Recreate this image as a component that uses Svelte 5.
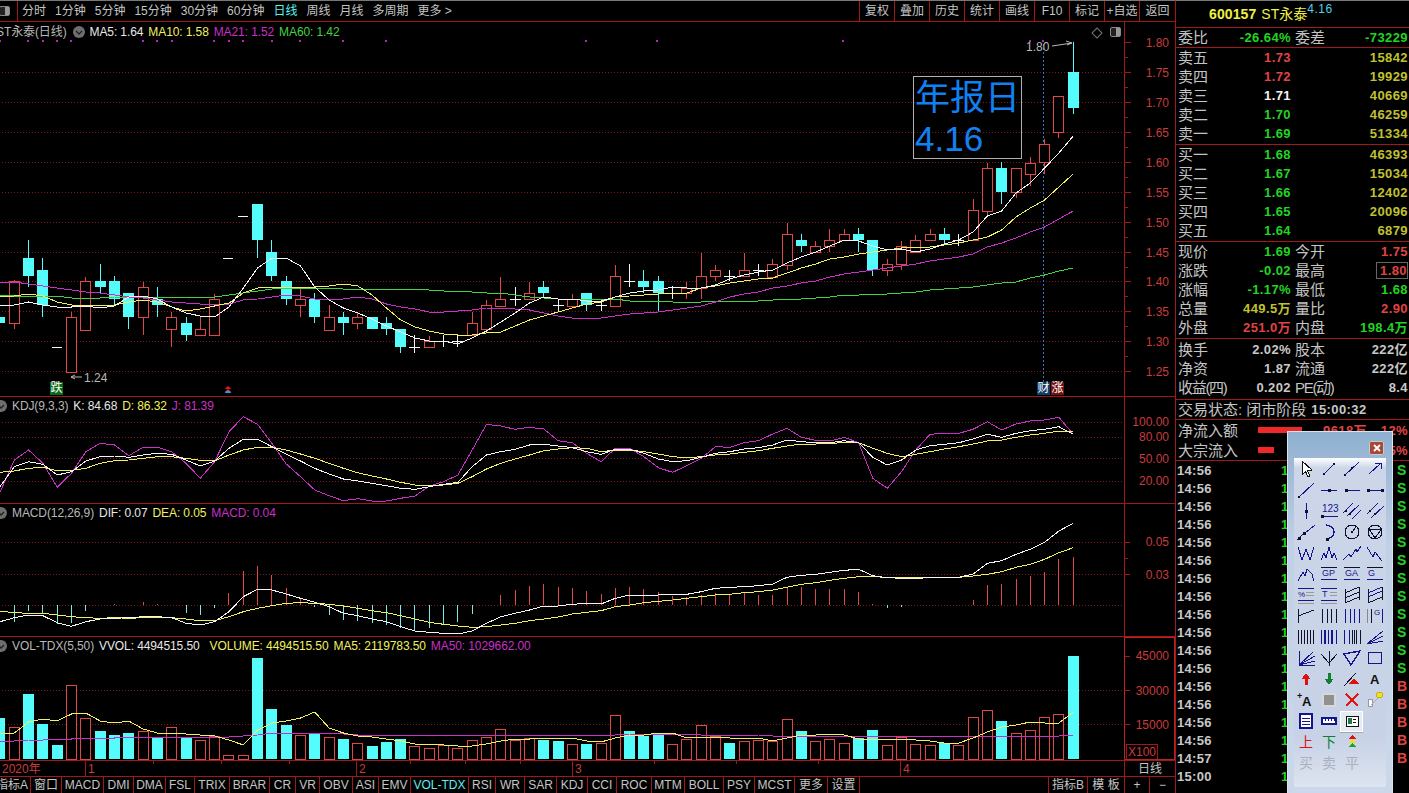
<script>
	// x of candle n; n runs from -1 (clipped at the left edge) to 74
	const X = (n) => 14.3 + 14.31 * n;
	const px = (n) => Math.floor(X(n));

	// [wickTop, bodyTop, bodyBottom, wickBottom, kind] u=red d=cyan x=doji f=flat
	const candles = [
		[287, 317, 323, 335, 'd'], [280, 281, 323, 329, 'u'], [240, 258, 276, 287, 'd'], [258, 270, 305, 317, 'd'],
		[347, 347, 347, 347, 'f'], [312, 317, 372, 373, 'u'], [277, 281, 330, 330, 'u'], [264, 281, 287, 293, 'd'],
		[276, 281, 299, 305, 'd'], [293, 293, 317, 329, 'd'], [282, 287, 317, 335, 'u'], [287, 299, 305, 317, 'd'],
		[312, 317, 329, 347, 'u'], [317, 323, 335, 341, 'd'], [317, 329, 335, 335, 'u'], [294, 299, 335, 335, 'u'],
		[258, 258, 258, 258, 'f'], [216, 216, 216, 216, 'f'], [204, 204, 240, 258, 'd'], [240, 252, 276, 281, 'd'],
		[276, 281, 299, 305, 'd'], [287, 299, 305, 317, 'u'], [293, 299, 317, 323, 'd'], [305, 317, 330, 330, 'u'],
		[312, 317, 323, 335, 'd'], [312, 317, 323, 329, 'u'], [317, 317, 329, 329, 'd'], [317, 323, 329, 335, 'd'],
		[329, 329, 347, 353, 'd'], [335, 347, 347, 353, 'x'], [336, 341, 347, 347, 'u'], [335, 341, 341, 347, 'x'],
		[335, 341, 341, 347, 'x'], [312, 323, 335, 335, 'u'], [300, 305, 329, 329, 'u'], [277, 299, 306, 306, 'u'],
		[287, 299, 299, 306, 'x'], [282, 293, 299, 300, 'u'], [281, 287, 293, 297, 'd'], [299, 305, 305, 311, 'x'],
		[294, 299, 306, 306, 'u'], [293, 293, 305, 311, 'd'], [299, 305, 305, 311, 'x'], [265, 276, 306, 306, 'u'],
		[264, 281, 281, 287, 'x'], [270, 281, 287, 293, 'd'], [276, 281, 293, 311, 'd'], [287, 293, 293, 299, 'x'],
		[282, 288, 293, 299, 'u'], [253, 276, 288, 299, 'u'], [265, 270, 276, 281, 'u'], [270, 276, 276, 281, 'x'],
		[253, 270, 276, 277, 'u'], [264, 270, 270, 276, 'x'], [259, 264, 277, 277, 'u'], [223, 234, 265, 270, 'u'],
		[234, 240, 246, 252, 'd'], [241, 246, 252, 253, 'u'], [229, 240, 246, 252, 'u'], [229, 234, 240, 241, 'u'],
		[228, 234, 240, 252, 'd'], [240, 240, 270, 276, 'd'], [259, 264, 270, 276, 'u'], [241, 246, 264, 270, 'u'],
		[235, 240, 252, 252, 'u'], [229, 234, 240, 241, 'u'], [228, 234, 240, 245, 'd'], [234, 240, 240, 246, 'x'],
		[199, 210, 240, 240, 'u'], [163, 168, 211, 216, 'u'], [162, 168, 192, 204, 'd'], [168, 168, 192, 198, 'u'],
		[157, 163, 174, 186, 'u'], [139, 144, 162, 174, 'u'], [96, 96, 132, 138, 'u'], [42, 72, 108, 114, 'd']
	];

	const ma5 = [305, 305, 302, 305, 307, 307, 306, 308, 306, 297, 296, 299, 307, 313, 316, 317, 307, 288, 268, 258, 258, 266, 287, 300, 308, 313, 319, 326, 332, 338, 341, 341, 344, 338, 331, 322, 313, 303, 297, 299, 299, 301, 301, 297, 293, 291, 290, 287, 288, 288, 285, 279, 275, 272, 270, 263, 257, 252, 246, 240, 241, 246, 250, 249, 252, 249, 244, 240, 232, 216, 211, 193, 183, 168, 153, 136];
	const ma10 = [297, 296, 294, 296, 302, 305, 305, 305, 305, 302, 300, 302, 307, 311, 309, 306, 303, 293, 288, 287, 287, 287, 287, 286, 284, 286, 295, 308, 320, 327, 331, 334, 335, 335, 333, 332, 326, 320, 316, 312, 308, 304, 302, 297, 296, 295, 294, 293, 293, 288, 286, 283, 281, 279, 278, 273, 268, 264, 259, 257, 254, 252, 250, 248, 247, 247, 245, 243, 240, 237, 230, 217, 208, 200, 187, 174];
	const ma21 = [282, 282, 284, 286, 288, 290, 292, 293, 295, 297, 298, 300, 302, 303, 304, 305, 304, 300, 299, 297, 295, 296, 299, 299, 299, 297, 299, 304, 307, 309, 312, 312, 311, 310, 308, 308, 309, 310, 313, 316, 318, 318, 318, 316, 314, 313, 312, 310, 308, 306, 302, 297, 294, 292, 288, 286, 283, 281, 277, 274, 272, 270, 268, 266, 264, 261, 259, 257, 254, 247, 243, 238, 232, 227, 219, 211];
	const ma60 = [295, 296, 296, 296, 296, 298, 299, 298, 297, 297, 297, 297, 297, 297, 297, 297, 295, 293, 291, 289, 288, 288, 288, 288, 289, 289, 289, 289, 289, 289, 290, 291, 291, 292, 293, 293, 295, 297, 298, 299, 299, 299, 299, 299, 301, 301, 301, 302, 302, 302, 301, 301, 301, 301, 300, 299, 299, 298, 297, 295, 295, 294, 294, 293, 292, 290, 289, 288, 287, 285, 283, 282, 278, 275, 271, 268];

	// KDJ and MACD samples read off at 3x, from y=395
	const z = (a) => a.map((v) => 395 + v / 3);
	const kdjK = z([275, 215, 200, 208, 240, 230, 198, 185, 183, 187, 180, 175, 178, 195, 213, 198, 160, 133, 133, 155, 178, 198, 220, 237, 252, 258, 265, 272, 280, 283, 275, 268, 262, 215, 180, 170, 163, 150, 148, 153, 158, 170, 178, 163, 163, 175, 192, 200, 197, 187, 175, 170, 162, 158, 150, 135, 140, 143, 143, 137, 143, 187, 210, 195, 165, 152, 148, 143, 132, 118, 127, 115, 107, 103, 95, 118]);
	const kdjD = z([232, 228, 220, 217, 227, 226, 220, 205, 197, 195, 190, 185, 185, 190, 196, 198, 180, 165, 157, 157, 165, 177, 190, 205, 220, 233, 243, 252, 262, 270, 272, 270, 265, 245, 222, 205, 192, 180, 167, 162, 158, 160, 170, 165, 165, 170, 177, 185, 188, 185, 180, 177, 172, 167, 160, 153, 147, 147, 145, 143, 143, 160, 175, 185, 178, 170, 162, 155, 147, 138, 135, 127, 120, 115, 108, 108]);
	const kdjJ = z([292, 195, 165, 205, 277, 235, 170, 145, 150, 182, 157, 157, 170, 205, 250, 200, 110, 65, 88, 145, 207, 245, 285, 302, 317, 311, 318, 318, 310, 303, 273, 260, 240, 165, 88, 93, 103, 97, 102, 137, 143, 175, 200, 160, 160, 185, 218, 232, 212, 190, 155, 157, 143, 137, 117, 100, 127, 136, 138, 127, 143, 250, 280, 230, 165, 118, 115, 115, 103, 80, 105, 87, 78, 75, 67, 118]);
	const dif = z([680, 668, 660, 662, 683, 694, 680, 672, 670, 668, 665, 665, 668, 685, 690, 680, 650, 605, 583, 585, 597, 610, 622, 635, 655, 662, 672, 680, 695, 708, 712, 715, 717, 708, 685, 665, 655, 645, 633, 633, 628, 625, 627, 610, 600, 600, 600, 598, 598, 590, 580, 577, 575, 572, 567, 547, 541, 538, 532, 526, 523, 542, 548, 550, 550, 548, 547, 547, 537, 505, 497, 478, 463, 442, 408, 385]);
	const dea = z([648, 653, 655, 655, 660, 665, 668, 670, 668, 670, 668, 667, 668, 672, 677, 677, 665, 650, 640, 632, 625, 623, 625, 628, 633, 640, 647, 653, 662, 672, 682, 688, 693, 697, 695, 690, 685, 677, 672, 666, 657, 652, 647, 635, 630, 623, 619, 615, 610, 605, 600, 598, 593, 590, 585, 577, 568, 563, 556, 550, 545, 545, 547, 548, 548, 547, 547, 547, 543, 538, 530, 517, 508, 493, 473, 458]);
	const hist = z([680, 680, 648, 655, 688, 683, 648, 631, 628, 631, 622, 627, 631, 655, 660, 640, 595, 528, 513, 540, 578, 610, 636, 660, 675, 678, 685, 690, 700, 708, 698, 690, 680, 657, 630, 600, 585, 573, 568, 575, 578, 588, 597, 578, 576, 582, 592, 603, 607, 601, 595, 598, 595, 600, 600, 578, 576, 582, 582, 582, 590, 628, 640, 636, 631, 630, 631, 631, 615, 570, 567, 552, 543, 531, 492, 486]);
	const macdBase = 605.3;

	// top of each volume bar, bars stand on y=759
	const volTops = [718, 727, 694, 724, 745, 685, 718, 731, 735, 733, 731, 737, 727, 737, 740, 736, 755, 755, 658, 709, 725, 735, 734, 737, 739, 743, 746, 742, 739, 746, 748, 745, 748, 740, 737, 729, 740, 738, 740, 741, 744, 744, 743, 715, 731, 736, 735, 744, 739, 725, 736, 743, 741, 740, 741, 719, 731, 741, 739, 743, 738, 730, 745, 737, 744, 745, 743, 745, 717, 710, 721, 733, 730, 717, 714, 656];
	const volSide = 'duddd uu ddd u d u d uuuu ddd u d u d u ddd uuuuuuuuu dd u d uu ddd uuuu d uuuu d uuu dd uuuu d uuu d uuuu d'.replace(/ /g, '');
	const volMa5 = [734, 733, 722, 719, 721, 714, 713, 721, 723, 721, 729, 733, 733, 734, 735, 736, 740, 745, 730, 723, 721, 718, 712, 728, 733, 736, 737, 739, 741, 744, 744, 745, 746, 746, 744, 741, 739, 739, 738, 738, 738, 741, 742, 738, 735, 735, 733, 733, 738, 737, 737, 738, 738, 738, 741, 738, 735, 735, 734, 735, 739, 739, 739, 739, 740, 741, 743, 743, 738, 732, 727, 725, 722, 723, 723, 712];
	const volMa50 = [741, 741, 740, 740, 739, 739, 738, 738, 738, 737, 737, 737, 737, 737, 737, 737, 737, 736, 735, 733, 733, 733, 733, 733, 734, 735, 735, 735, 735, 735, 735, 735, 735, 735, 735, 735, 735, 735, 735, 735, 735, 735, 735, 735, 734, 734, 734, 734, 734, 735, 735, 735, 735, 735, 736, 736, 736, 736, 736, 736, 736, 736, 736, 736, 736, 736, 736, 736, 736, 736, 736, 736, 736, 736, 736, 735];

	const pts = (ys) => ys.map((y, i) => `${X(i - 1).toFixed(1)},${y.toFixed(1)}`).join(' ');

	const mainGrid = [72, 102, 132, 162, 192, 222, 252, 281.5, 311.5, 341.5, 371.5];
	const prices = [[1.8, 43], [1.75, 73], [1.7, 103], [1.65, 133], [1.6, 163], [1.55, 193], [1.5, 223], [1.45, 253], [1.4, 282], [1.35, 312], [1.3, 342], [1.25, 372]];
	const signalDots = [0, 28, 43, 57, 71, 143, 157, 172, 214, 229, 243, 272, 300, 343, 386, 586, 657, 843, 1030, 1043];
	const dateTicks = [153, 221, 289, 410, 465, 520, 654, 736, 818];

	const periods = ['分时', '1分钟', '5分钟', '15分钟', '30分钟', '60分钟', '日线', '周线', '月线', '多周期', '更多 >'];
	const tools = ['复权', '叠加', '历史', '统计', '画线', 'F10', '标记', '+自选', '返回'];
	// tab label, width
	const tabs = [['指标A', 31], ['窗口', 31], ['MACD', 42], ['DMI', 30], ['DMA', 32], ['FSL', 29], ['TRIX', 35], ['BRAR', 40], ['CR', 26], ['VR', 24], ['OBV', 33], ['ASI', 26], ['EMV', 32], ['VOL-TDX', 58], ['RSI', 27], ['WR', 29], ['SAR', 32], ['KDJ', 31], ['CCI', 29], ['ROC', 35], ['MTM', 33], ['BOLL', 39], ['PSY', 31], ['MCST', 40], ['更多', 33], ['设置', 32]];

	const sells = [['卖五', '1.73', 'red', '15842'], ['卖四', '1.72', 'red', '19929'], ['卖三', '1.71', 'white', '40669'], ['卖二', '1.70', 'green', '46259'], ['卖一', '1.69', 'green', '51334']];
	const buys = [['买一', '1.68', 'green', '46393'], ['买二', '1.67', 'green', '15034'], ['买三', '1.66', 'green', '12402'], ['买四', '1.65', 'green', '20096'], ['买五', '1.64', 'green', '6879']];
	const quotes = [
		['现价', '1.69', 'green', '今开', '1.75', 'red'],
		['涨跌', '-0.02', 'green', '最高', '1.80', 'red boxed'],
		['涨幅', '-1.17%', 'green', '最低', '1.68', 'green'],
		['总量', '449.5万', 'olive', '量比', '2.90', 'red'],
		['外盘', '251.0万', 'red', '内盘', '198.4万', 'green']
	];
	const stats = [['换手', '2.02%', '股本', '222亿'], ['净资', '1.87', '流通', '222亿'], ['收益(四)', '0.202', 'PE(动)', '8.4']];

	const ticks = Array.from({ length: 18 }, (_, i) => ({
		time: i < 16 ? '14:56' : i === 16 ? '14:57' : '15:00',
		side: i < 12 ? 'S' : i < 17 ? 'B' : ''
	}));

	// drawing palette: one 22x20 svg body per cell
	const B = '#14148c';
	const K = '#101030';
	const L = (a, b, c, d, col = B) => `<line x1="${a}" y1="${b}" x2="${c}" y2="${d}" stroke="${col}"/>`;
	const D = (x, y, s = 3) => `<rect x="${x - s / 2}" y="${y - s / 2}" width="${s}" height="${s}" fill="${K}"/>`;
	const P = (p, col = B) => `<polyline points="${p}" fill="none" stroke="${col}"/>`;
	const T = (s, x, y, size, col = B, w = 400) => `<text x="${x}" y="${y}" font-size="${size}" fill="${col}" font-weight="${w}" font-family="Liberation Sans, Noto Sans CJK SC, sans-serif">${s}</text>`;
	const bars = (xs, col = K) => xs.map((x) => L(x, 3, x, 17, col)).join('');
	const icons = [
		`<path d="M7 2V16L10.5 12.5L13 18L15 17L12.5 11.5L17 11Z" fill="#fff" stroke="#111"/>`,
		L(6, 15, 17, 4) + D(6, 15, 2) + D(16, 5, 2),
		L(3, 17, 18, 3) + D(4, 16, 2) + D(11, 9, 2),
		L(5, 15, 17, 4) + P('11,4 17,4 17,10'),
		L(3, 18, 19, 3) + D(4, 17, 2),
		L(3, 10, 19, 10) + D(11, 10),
		L(4, 10, 19, 10) + D(5, 10),
		L(3, 10, 19, 10) + D(4, 10) + D(18, 10),
		L(11, 2, 11, 18) + D(11, 10),
		T('123', 4, 11, 10) + L(4, 15, 20, 15) + D(4, 15),
		L(2, 12, 12, 2) + L(6, 15, 18, 4) + L(11, 18, 20, 9) + D(5, 10, 2) + D(9, 13, 2),
		L(3, 13, 14, 2) + L(7, 17, 20, 5) + D(6, 10, 2) + D(11, 13, 2),
		L(2, 18, 10, 10, K) + L(10, 11, 20, 3) + D(4, 16) + D(9, 11),
		`<path d="M8 3A8 7 0 0 1 8 17" fill="none" stroke="${B}" stroke-width="1.4"/>` + D(9, 17),
		`<circle cx="11" cy="10" r="7" fill="none" stroke="${K}"/>` + L(11, 10, 15, 5, K) + D(11, 10, 2),
		`<circle cx="11" cy="10" r="7" fill="none" stroke="${K}"/><polygon points="5,7 17,8 11,16" fill="none" stroke="${K}"/>`,
		P('3,4 7,17 11,6 15,17 19,4'),
		P('3,17 6,10 8,15 11,4 14,15 16,10 19,17'),
		P('2,17 8,11 10,14 15,6 16,9 20,3'),
		P('3,4 9,14 11,9 18,18'),
		P('3,17 8,8 10,12 12,5 17,10 19,17'),
		L(3, 3, 19, 3, K) + T('GP', 4, 12, 9) + L(3, 15, 19, 15),
		L(3, 3, 19, 3, K) + T('GA', 4, 12, 9) + L(3, 15, 19, 15),
		L(3, 3, 19, 3, K) + T('G', 4, 12, 9) + L(3, 15, 19, 15),
		L(3, 3, 19, 3) + T('%', 3, 12, 8) + L(11, 7, 19, 7, '#999') + L(11, 10, 19, 10, '#999') + L(3, 15, 19, 15) + L(3, 18, 19, 18, '#999'),
		L(3, 3, 19, 3) + T('T', 4, 12, 9) + L(12, 7, 19, 7, '#999') + L(12, 10, 19, 10, '#999') + L(3, 15, 19, 15) + L(3, 18, 19, 18, '#999'),
		L(4, 4, 4, 18, K) + L(18, 2, 18, 15, K) + L(4, 8, 18, 2, K) + L(4, 13, 18, 7, K) + L(4, 18, 18, 12, K),
		L(4, 4, 4, 18, K) + L(18, 2, 18, 15, K) + L(4, 8, 18, 2) + L(4, 12, 18, 6) + L(4, 18, 18, 12, K),
		L(3, 3, 3, 17, K) + L(3, 10, 19, 4, K),
		bars([4, 9, 13, 18]),
		bars([4, 9, 13, 18], B),
		L(3, 3, 3, 17, '#888') + L(7, 3, 7, 17, K) + T('G', 10, 9, 8) + L(18, 3, 18, 17, B),
		bars([3, 6, 9, 12, 15, 18]),
		bars([3, 6, 7, 10, 13, 14, 18], B),
		bars([3, 8], B) + bars([11, 13, 15, 19]),
		L(3, 17, 19, 4) + L(3, 17, 19, 9) + L(3, 17, 19, 14),
		L(4, 3, 4, 17) + L(4, 17, 20, 17) + L(4, 17, 18, 4) + L(4, 17, 20, 8) + L(4, 17, 20, 13),
		L(3, 6, 11, 15, K) + L(19, 6, 11, 15, K) + L(11, 3, 11, 18, K),
		`<polygon points="3,6 19,3 10,17" fill="none" stroke="${B}" stroke-width="1.4"/>`,
		`<rect x="4.5" y="4.5" width="13" height="11" fill="none" stroke="${B}" stroke-width="1.4"/>`,
		`<path d="M11 4L15.5 10H12.5V16H9.5V10H6.5Z" fill="#e01010"/>`,
		`<path d="M11 16L15.5 10H12.5V4H9.5V10H6.5Z" fill="#108030"/>`,
		L(3, 17, 15, 4, K) + `<path d="M13 9L18 15H8Z" fill="#e01010"/>`,
		T('A', 6, 15, 13, '#101010', 700),
		T('+', 2, 9, 9, '#101010', 700) + T('A', 7, 16, 13, '#101010', 700),
		`<rect x="5" y="4" width="12" height="12" fill="#909090" stroke="#d8d8d8" stroke-width="2"/>`,
		`<path d="M5 4L17 16M17 4L5 16" stroke="#e01818" stroke-width="1.8"/>`,
		`<rect x="4" y="9" width="4" height="7" fill="#fff" stroke="#999"/>` + L(7, 15, 16, 6, '#aaa') + `<circle cx="15.5" cy="5" r="3" fill="#f0e020" stroke="#c0b020"/>`,
		`<rect x="5" y="3" width="12" height="14" fill="#fff" stroke="${B}" stroke-width="1.4"/>` + L(7, 7, 15, 7) + L(7, 10, 15, 10) + L(7, 13, 15, 13),
		`<rect x="4" y="7" width="14" height="6" fill="#fff" stroke="${B}" stroke-width="1.4"/>` + L(7, 7, 7, 10) + L(10, 7, 10, 10) + L(13, 7, 13, 10) + L(16, 7, 16, 10),
		`<rect x="5" y="5" width="12" height="10" fill="#fff" stroke="#111"/><rect x="7" y="7" width="4" height="6" fill="#1c7c3c"/>` + L(12, 8, 15, 8, '#111') + L(12, 11, 15, 11, '#111'),
		'',
		T('上', 4, 15, 14, '#e01010'),
		T('下', 4, 15, 14, '#108030'),
		`<path d="M11 3L15 7H7Z" fill="#e01010"/><path d="M11 7L15 11H7Z" fill="#f0e020"/><path d="M11 11L15 15H7Z" fill="#20a030"/>`,
		'',
		T('买', 4, 15, 14, '#aab0bc'),
		T('卖', 4, 15, 14, '#aab0bc'),
		T('平', 4, 15, 14, '#aab0bc'),
		''
	];
</script>

{#snippet check()}
	<svg class="check" width="12" height="12" viewBox="0 0 12 12">
		<circle cx="6" cy="6" r="6" fill="#6e6e6e" />
		<path d="M3 5l3 3 3-3" fill="none" stroke="#222" stroke-width="1.4" />
	</svg>
{/snippet}

<div class="app">
	<div class="left">
		<div class="toolbar">
			<div class="winbtn"><span class="winicon"></span></div>
			<div class="periods">
				{#each periods as p}
					<span class:on={p === '日线'}>{p}</span>
				{/each}
			</div>
			<div class="tools">
				{#each tools as t}
					<span>{t}</span>
				{/each}
			</div>
		</div>

		<div class="pane main">
			<svg width="1175" height="374" viewBox="0 22 1175 374">
				{#each mainGrid as y}
					<line class="grid" x1="2" y1={y} x2="1124" y2={y} />
				{/each}
				<line class="axis" x1="1124.5" y1="22" x2="1124.5" y2="396" />
				{#each prices as [p, y], i}
					<line class="axis" x1="1125" y1={y - 0.5} x2="1131" y2={y - 0.5} />
					{#if i < prices.length - 1}
						<line class="axis" x1="1125" y1={y + 14.5} x2="1128" y2={y + 14.5} />
					{/if}
					<text class="tick" x="1169" y={y + 4}>{p.toFixed(2)}</text>
				{/each}
				<line class="mark" x1="1043.5" y1="40" x2="1043.5" y2="382" />
				{#each signalDots as x}
					<rect x={x - 1} y="40" width="2" height="2" fill="#c020c0" />
				{/each}
				{#each candles as [wt, bt, bb, wb, kind], i}
					{@const cx = px(i - 1)}
					{#if kind === 'f'}
						<line class="doji" x1={cx - 5} y1={bt + 0.5} x2={cx + 5} y2={bt + 0.5} />
					{:else if kind === 'x'}
						<line class="doji" x1={cx + 0.5} y1={wt} x2={cx + 0.5} y2={wb} />
						<line class="doji" x1={cx - 5} y1={bt + 0.5} x2={cx + 6} y2={bt + 0.5} />
					{:else if kind === 'u'}
						<line class="wick-up" x1={cx + 0.5} y1={wt} x2={cx + 0.5} y2={wb} />
						<rect class="up" x={cx - 4.5} y={bt + 0.5} width="10" height={bb - bt} />
					{:else}
						<line class="wick-down" x1={cx + 0.5} y1={wt} x2={cx + 0.5} y2={wb} />
						<rect class="down" x={cx - 5} y={bt} width="11" height={bb - bt} />
					{/if}
				{/each}
				<polyline class="ln green" points={pts(ma60)} />
				<polyline class="ln magenta" points={pts(ma21)} />
				<polyline class="ln yellow" points={pts(ma10)} />
				<polyline class="ln white" points={pts(ma5)} />
				<path class="note-arrow" d="M1052 46L1072 43M1066 41L1072 43L1067 45" />
				<line class="note-stem" x1="1073.5" y1="42" x2="1073.5" y2="72" />
				<path class="note-arrow" d="M71 377H82M71 377L75 375M71 377L75 379" />
				<path d="M228 386l3.5 3h-7zM228 389l3.5 3h-7z" fill="#e01818" />
				<path d="M228 390l3.5 3h-7z" fill="#20a0e0" />
			</svg>
			<div class="legend">
				<span class="gray name">ST永泰(日线)</span>
				{@render check()}
				<span class="lw">MA5: 1.64</span>
				<span class="ly">MA10: 1.58</span>
				<span class="lm">MA21: 1.52</span>
				<span class="lg">MA60: 1.42</span>
			</div>
			<span class="peak">1.80</span>
			<span class="low">1.24</span>
			<span class="badge fall">跌</span>
			<span class="badge fin">财</span>
			<span class="badge rise">涨</span>
			<span class="diamond"></span>
			<span class="winicon corner"></span>
			<div class="note">
				<div class="note-cn">年报日</div>
				<div class="note-num">4.16</div>
			</div>
		</div>

		<div class="pane kdj">
			<svg width="1175" height="106" viewBox="0 397 1175 106">
				{#each [[100, 422], [80, 437], [50, 458.5], [20, 481]] as [v, y]}
					<line class="grid" x1="2" y1={y} x2="1124" y2={y} />
					<text class="tick" x="1169" y={y + 4}>{v.toFixed(2)}</text>
				{/each}
				<line class="axis" x1="1124.5" y1="397" x2="1124.5" y2="503" />
				<polyline class="ln magenta" points={pts(kdjJ)} />
				<polyline class="ln yellow" points={pts(kdjD)} />
				<polyline class="ln white" points={pts(kdjK)} />
			</svg>
			<div class="legend sub">
				{@render check()}
				<span class="gray">KDJ(9,3,3)</span>
				<span class="lw">K: 84.68</span>
				<span class="ly">D: 86.32</span>
				<span class="lm">J: 81.39</span>
			</div>
		</div>

		<div class="pane macd">
			<svg width="1175" height="132" viewBox="0 504 1175 132">
				{#each [[0.05, 542], [0.03, 574.5]] as [v, y]}
					<line class="grid" x1="2" y1={y} x2="1124" y2={y} />
					<line class="axis" x1="1125" y1={y} x2="1130" y2={y} />
					<text class="tick" x="1169" y={y + 4}>{v.toFixed(2)}</text>
				{/each}
				<line class="axis" x1="1125" y1="558.5" x2="1128" y2="558.5" />
				<line class="grid" x1="2" y1={macdBase} x2="1124" y2={macdBase} />
				<line class="axis" x1="1124.5" y1="504" x2="1124.5" y2="636" />
				{#each hist as v, i}
					<line
						class={v < macdBase ? 'hist-up' : 'hist-down'}
						x1={px(i - 1) + 0.5}
						y1={macdBase}
						x2={px(i - 1) + 0.5}
						y2={v}
					/>
				{/each}
				<polyline class="ln yellow" points={pts(dea)} />
				<polyline class="ln white" points={pts(dif)} />
			</svg>
			<div class="legend sub">
				{@render check()}
				<span class="gray">MACD(12,26,9)</span>
				<span class="lw">DIF: 0.07</span>
				<span class="ly">DEA: 0.05</span>
				<span class="lm">MACD: 0.04</span>
			</div>
		</div>

		<div class="pane vol">
			<svg width="1175" height="123" viewBox="0 637 1175 123">
				{#each [690.5, 724.5] as y}
					<line class="grid" x1="2" y1={y} x2="1124" y2={y} />
				{/each}
				{#each [[45000, 656], [30000, 690.5], [15000, 724.5]] as [v, y]}
					<line class="axis" x1="1125" y1={y} x2="1130" y2={y} />
					<text class="tick" x="1169" y={y + 4}>{v}</text>
				{/each}
				<rect class="axisbox" x="1124.5" y="637.5" width="50" height="122" />
				{#each volTops as top, i}
					{@const cx = px(i - 1)}
					{#if volSide[i] === 'd'}
						<rect class="down" x={cx - 5} y={top} width="11" height={759 - top} />
					{:else}
						<rect class="up" x={cx - 4.5} y={top + 0.5} width="10" height={759 - top} />
					{/if}
				{/each}
				<polyline class="ln magenta" points={pts(volMa50)} />
				<polyline class="ln yellow" points={pts(volMa5)} />
			</svg>
			<div class="legend sub">
				{@render check()}
				<span class="gray">VOL-TDX(5,50)</span>
				<span class="lw">VVOL: 4494515.50</span>
				<span class="ly wide">VOLUME: 4494515.50</span>
				<span class="ly">MA5: 2119783.50</span>
				<span class="lm">MA50: 1029662.00</span>
			</div>
			<span class="x100">X100</span>
		</div>

		<div class="dates">
			<span class="year">2020年</span>
			<span class="mon m1">1</span>
			<span class="mon m2">2</span>
			<span class="mon m3">3</span>
			<span class="mon m4">4</span>
			{#each dateTicks as x}
				<i class="dtick" style="left:{x}px"></i>
			{/each}
			<span class="unit">日线</span>
		</div>

		<div class="tabs">
			{#each tabs as [label, w]}
				<span class="tab" class:cur={label === 'VOL-TDX'} style="width:{w}px">{label}</span>
			{/each}
			<span class="spacer"></span>
			<span class="tab" style="width:39px">指标B</span>
			<span class="tab" style="width:37px">模 板</span>
			<span class="tab" style="width:25px">+</span>
			<span class="tab last" style="width:25px">−</span>
		</div>
	</div>

	<div class="right">
		<div class="head">
			<b>600157</b>
			<span class="hname">ST永泰</span>
			<span class="hsup">4.16</span>
		</div>
		<div class="sect">
			<div class="row">
				<span class="lab">委比</span><b class="val green">-26.64%</b>
				<span class="lab l2">委差</span><b class="val green">-73229</b>
			</div>
		</div>
		<div class="sect five">
			{#each sells as [lab, p, c, v]}
				<div class="row">
					<span class="lab">{lab}</span><b class="val {c}">{p}</b><b class="val olive last">{v}</b>
				</div>
			{/each}
		</div>
		<div class="sect five">
			{#each buys as [lab, p, c, v]}
				<div class="row">
					<span class="lab">{lab}</span><b class="val {c}">{p}</b><b class="val olive last">{v}</b>
				</div>
			{/each}
		</div>
		<div class="sect five">
			{#each quotes as [a, av, ac, b, bv, bc]}
				<div class="row">
					<span class="lab">{a}</span><b class="val {ac}">{av}</b>
					<span class="lab l2">{b}</span><b class="val {bc}">{bv}</b>
				</div>
			{/each}
		</div>
		<div class="sect three">
			{#each stats as [a, av, b, bv]}
				<div class="row">
					<span class="lab" class:tight={a.length > 2}>{a}</span><b class="val pale">{av}</b>
					<span class="lab l2" class:tight={b.length > 2}>{b}</span><b class="val pale">{bv}</b>
				</div>
			{/each}
		</div>
		<div class="sect status">
			<span class="lab">交易状态: 闭市阶段</span><b class="val pale">15:00:32</b>
		</div>
		<div class="sect flows">
			<div class="flow">
				<span class="lab">净流入额</span><i class="fbar b1"></i>
				<b class="val red fv">9618万</b><b class="val red fp">12%</b>
			</div>
			<div class="flow">
				<span class="lab">大宗流入</span><i class="fbar b2"></i>
				<b class="val red fv">3520万</b><b class="val red fp">5%</b>
			</div>
		</div>
		<div class="trades">
			{#each ticks as t}
				<div class="trade">
					<b class="ttime">{t.time}</b>
					<b class="tvol">1</b>
					<b class="tside" class:buy={t.side === 'B'}>{t.side}</b>
				</div>
			{/each}
		</div>
	</div>

	<div class="palette">
		<div class="pclose"><svg width="8" height="8" viewBox="0 0 8 8"><path d="M1 1L7 7M7 1L1 7" stroke="#fff" stroke-width="1.8" /></svg></div>
		<div class="pgrid">
			{#each icons as icon, i}
				<div class="pcell" class:sel={i === 50}>
					{#if icon}
						<svg width="22" height="20" viewBox="0 0 22 20" shape-rendering="crispEdges">{@html icon}</svg>
					{/if}
				</div>
			{/each}
		</div>
	</div>
</div>

<style>
	:global(body) {
		margin: 0;
		background: #000;
	}
	.app {
		position: relative;
		display: flex;
		width: 1409px;
		height: 793px;
		overflow: hidden;
		background: #000;
		color: #c4c4c4;
		font: 12px/1 'Liberation Sans', 'Noto Sans CJK SC', sans-serif;
	}
	.left {
		display: flex;
		flex-direction: column;
		width: 1175px;
		flex: none;
	}
	.toolbar {
		display: flex;
		flex: none;
		height: 20px;
		border-top: 1px solid #777;
		border-bottom: 1px solid #a01818;
		align-items: center;
	}
	.winbtn {
		display: flex;
		align-items: center;
		width: 17px;
		height: 100%;
		border-right: 1px solid #a01818;
		flex: none;
	}
	.winicon {
		display: block;
		width: 11px;
		height: 10px;
		border: 1px solid #888;
		border-radius: 2px;
		background: linear-gradient(90deg, #222 60%, #999 60%);
		box-sizing: border-box;
	}
	.winbtn .winicon {
		margin-left: -1px;
	}
	.periods {
		display: flex;
		gap: 9px;
		padding-left: 4px;
		white-space: nowrap;
	}
	.periods .on {
		color: #5cf0f0;
	}
	.tools {
		display: flex;
		margin-left: auto;
		height: 100%;
		border-left: 1px solid #a01818;
	}
	.tools span {
		display: flex;
		align-items: center;
		justify-content: center;
		width: 35px;
		box-sizing: border-box;
		border-right: 1px solid #a01818;
		white-space: nowrap;
	}
	.tools span:last-child {
		border-right: 0;
	}
	.pane {
		position: relative;
		flex: none;
		border-bottom: 1px solid #a01818;
	}
	.pane svg {
		display: block;
	}
	.main {
		height: 374px;
	}
	.kdj {
		height: 106px;
	}
	.macd {
		height: 132px;
	}
	.vol {
		height: 123px;
	}
	.grid {
		stroke: #7c1818;
		stroke-dasharray: 1 2;
		shape-rendering: crispEdges;
	}
	.axis {
		stroke: #a01818;
		shape-rendering: crispEdges;
	}
	.axisbox {
		fill: none;
		stroke: #c02020;
		shape-rendering: crispEdges;
	}
	.tick {
		fill: #c83c3c;
		font-size: 12px;
		text-anchor: end;
	}
	.mark {
		stroke: #2f78d0;
		stroke-dasharray: 2 2;
		shape-rendering: crispEdges;
	}
	.doji {
		stroke: #f4f4f4;
		shape-rendering: crispEdges;
	}
	.wick-up {
		stroke: #e04848;
		shape-rendering: crispEdges;
	}
	.wick-down {
		stroke: #54fcfc;
		shape-rendering: crispEdges;
	}
	.up {
		fill: #000;
		stroke: #e04848;
		shape-rendering: crispEdges;
	}
	.down {
		fill: #54fcfc;
		shape-rendering: crispEdges;
	}
	.hist-up {
		stroke: #e04848;
		shape-rendering: crispEdges;
	}
	.hist-down {
		stroke: #78e8e8;
		shape-rendering: crispEdges;
	}
	.ln {
		fill: none;
		stroke-width: 1;
		stroke-linejoin: round;
		shape-rendering: crispEdges;
	}
	.ln.white {
		stroke: #f4f4f4;
	}
	.ln.yellow {
		stroke: #f0f060;
	}
	.ln.magenta {
		stroke: #c830c8;
	}
	.ln.green {
		stroke: #44d044;
	}
	.note-arrow {
		fill: none;
		stroke: #b8b8b8;
	}
	.note-stem {
		stroke: #54fcfc;
		shape-rendering: crispEdges;
	}
	.legend {
		position: absolute;
		left: -1px;
		top: 3px;
		display: flex;
		align-items: center;
		gap: 5px;
		height: 13px;
		white-space: nowrap;
		letter-spacing: -0.1px;
	}
	.legend.sub {
		left: -5px;
		top: 2px;
	}
	.legend .name {
		margin-left: -3px;
		margin-right: 1px;
	}
	.legend .wide {
		margin-left: 5px;
	}
	.gray {
		color: #b8b8b8;
	}
	.lw {
		color: #e8e8e8;
	}
	.ly {
		color: #f0f060;
	}
	.lm {
		color: #c830c8;
	}
	.lg {
		color: #44d044;
	}
	.pane .legend .check {
		flex: none;
	}
	.peak,
	.low {
		position: absolute;
		color: #b8b8b8;
	}
	.peak {
		left: 1026px;
		top: 19px;
	}
	.low {
		left: 84px;
		top: 350px;
	}
	.badge {
		position: absolute;
		top: 360px;
		width: 13px;
		height: 13px;
		line-height: 13px;
		text-align: center;
		color: #fff;
	}
	.fall {
		left: 50px;
		background: #0a6a18;
	}
	.fin {
		left: 1037px;
		background: #103c68;
	}
	.rise {
		left: 1051px;
		background: #781010;
	}
	.diamond {
		position: absolute;
		left: 1093px;
		top: 7px;
		width: 6px;
		height: 6px;
		border: 1px solid #777;
		transform: rotate(45deg);
	}
	.corner {
		position: absolute;
		left: 1110px;
		top: 5px;
	}
	.note {
		position: absolute;
		left: 913px;
		top: 54px;
		box-sizing: border-box;
		width: 109px;
		height: 83px;
		border: 1px solid #b0b0b0;
		color: #1180f0;
		padding-left: 1px;
		line-height: 1;
	}
	.note-cn {
		margin-top: 3px;
		font-size: 35px;
	}
	.note-num {
		margin-top: 6px;
		font-size: 35px;
	}
	.x100 {
		position: absolute;
		left: 1126px;
		top: 107px;
		width: 32px;
		height: 15px;
		line-height: 15px;
		border: 1px solid #a01818;
		border-bottom: 0;
		box-sizing: border-box;
		color: #c83c3c;
		text-align: center;
	}
	.dates {
		position: relative;
		flex: none;
		height: 15px;
		border-bottom: 1px solid #a01818;
		color: #c83c3c;
		line-height: 16px;
	}
	.dates .year {
		position: absolute;
		left: 2px;
	}
	.mon {
		position: absolute;
		border-left: 1px solid #a01818;
		padding-left: 2px;
		height: 15px;
	}
	.m1 {
		left: 85px;
	}
	.m2 {
		left: 356px;
	}
	.m3 {
		left: 572px;
	}
	.m4 {
		left: 900px;
	}
	.dtick {
		position: absolute;
		top: 0;
		width: 1px;
		height: 3px;
		background: #a01818;
	}
	.unit {
		position: absolute;
		left: 1124px;
		top: 0;
		width: 51px;
		height: 15px;
		box-sizing: border-box;
		border-left: 1px solid #a01818;
		text-align: center;
		color: #c4c4c4;
	}
	.tabs {
		display: flex;
		flex: 1;
		align-items: stretch;
	}
	.tab {
		display: flex;
		align-items: center;
		justify-content: center;
		box-sizing: border-box;
		border-right: 1px solid #a01818;
		white-space: nowrap;
		flex: none;
	}
	.tab.cur {
		color: #5cf0f0;
	}
	.tab.last {
		border-right: 0;
	}
	.tab:first-child {
		justify-content: flex-end;
		padding-right: 2px;
	}
	.spacer {
		flex: 1;
		border-right: 1px solid #a01818;
	}
	.right {
		flex: 1;
		border-left: 1px solid #a01818;
		border-top: 1px solid #777;
		display: flex;
		flex-direction: column;
		font-size: 15px;
		color: #c4c4c4;
	}
	.head {
		flex: none;
		height: 26px;
		display: flex;
		align-items: center;
		padding-left: 33px;
		color: #f0f040;
		border-bottom: 1px solid #a01818;
		white-space: nowrap;
	}
	.head b {
		font-size: 14px;
		letter-spacing: 0.1px;
	}
	.hname {
		margin-left: 5px;
		font-size: 14px;
	}
	.hsup {
		font-size: 12px;
		color: #50d0e8;
		margin-top: -10px;
		letter-spacing: 0.5px;
	}
	.sect {
		flex: none;
		border-bottom: 1px solid #a01818;
	}
	.five {
		padding-bottom: 1px;
	}
	.three {
		padding: 1px 0 2px;
	}
	.row {
		display: grid;
		grid-template-columns: 30px 83px 33px 1fr;
		align-items: center;
		height: 19px;
		padding: 0 1px 0 2px;
		white-space: nowrap;
	}
	.lab {
		flex: none;
	}
	.l2 {
		margin-left: 4px;
	}
	.tight {
		letter-spacing: -1.3px;
	}
	.val {
		text-align: right;
		font-size: 13px;
		letter-spacing: 0.4px;
		white-space: nowrap;
	}
	.last {
		grid-column: 3 / 5;
	}
	.green {
		color: #22d422;
	}
	.red {
		color: #e04444;
	}
	.white {
		color: #f4f4f4;
	}
	.olive {
		color: #c0c030;
	}
	.pale {
		color: #c8c8c8;
	}
	.boxed {
		justify-self: end;
		border: 1px solid #666;
		padding: 1px 0 1px 3px;
	}
	.status {
		display: flex;
		align-items: center;
		height: 19px;
		padding-left: 2px;
		white-space: nowrap;
	}
	.status .val {
		margin-left: 5px;
	}
	.flows {
		height: 40px;
	}
	.flow {
		position: relative;
		display: flex;
		align-items: center;
		height: 20px;
		padding: 0 1px 0 2px;
	}
	.fbar {
		position: absolute;
		left: 82px;
		height: 6px;
		background: #f02828;
	}
	.b1 {
		width: 44px;
	}
	.b2 {
		width: 16px;
	}
	.fv {
		position: absolute;
		left: 147px;
	}
	.fp {
		margin-left: auto;
	}
	.trades {
		flex: 1;
	}
	.trade {
		position: relative;
		display: flex;
		align-items: center;
		height: 18px;
		padding-left: 1px;
		font-size: 13px;
		letter-spacing: 0.3px;
	}
	.ttime {
		color: #c8c8c8;
	}
	.tvol {
		position: absolute;
		left: 105px;
		color: #22d422;
	}
	.tside {
		position: absolute;
		left: 221px;
		color: #22d422;
		font-size: 14px;
	}
	.tside.buy {
		color: #e04444;
	}
	.palette {
		position: absolute;
		left: 1287px;
		top: 431px;
		box-sizing: border-box;
		width: 106px;
		height: 370px;
		padding-top: 26px;
		border: 1px solid #d8e4f0;
		background: linear-gradient(#8fb0d0, #c0d0e6 30%, #ccd8ea);
	}
	.pclose {
		position: absolute;
		left: 81px;
		top: 9px;
		display: flex;
		align-items: center;
		justify-content: center;
		width: 15px;
		height: 14px;
		box-sizing: border-box;
		border: 1px solid #c8c8d0;
		border-radius: 2px;
		background: #a84838;
	}
	.pgrid {
		display: grid;
		grid-template-columns: repeat(4, 23px);
		grid-auto-rows: 21.07px;
		margin-left: 6px;
		width: 92px;
		height: 329px;
		background: linear-gradient(#fff, #ccd6e8 3%, #c8d2e6 85%, #dde4f0);
	}
	.pcell {
		display: flex;
		align-items: center;
		justify-content: center;
	}
	.pcell.sel {
		background: #e6eaf2;
		box-shadow: inset 0 0 0 1px #fff, 0 1px 0 #9aa;
	}
</style>
